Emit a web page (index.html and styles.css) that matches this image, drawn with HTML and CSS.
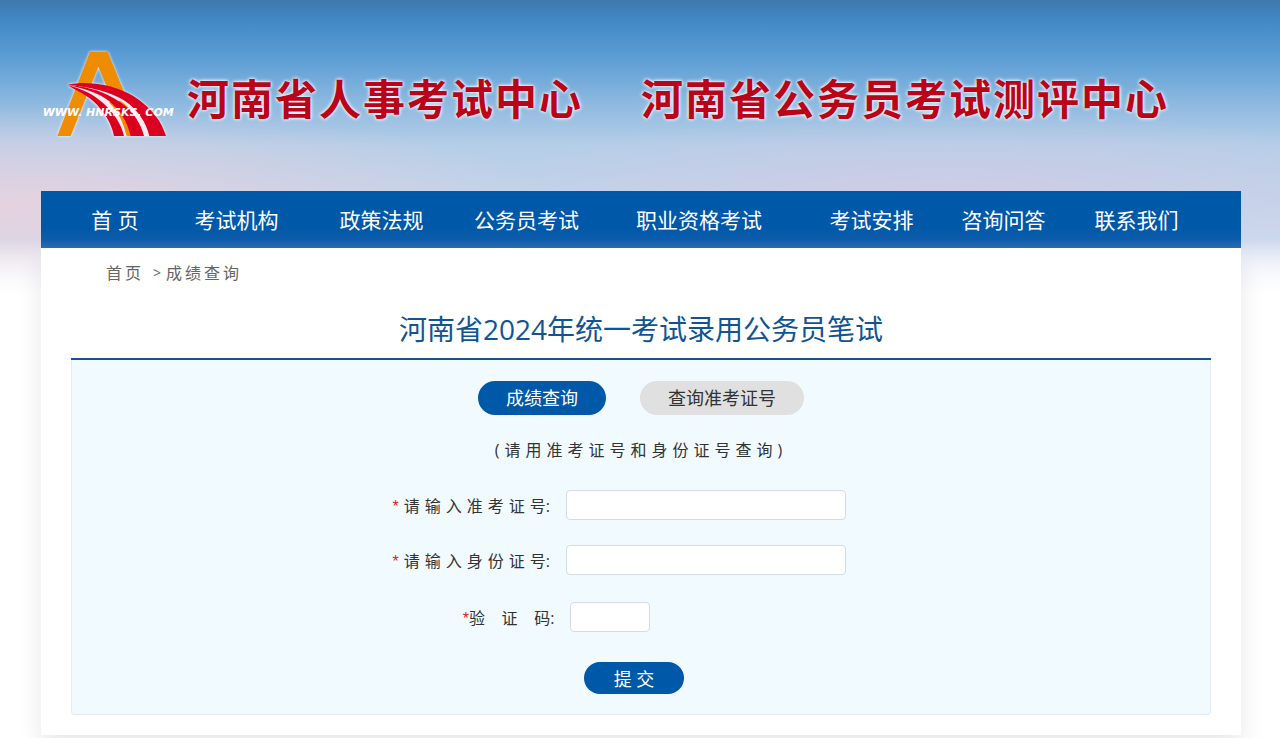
FILE: index.html
```html
<!DOCTYPE html>
<html lang="zh-CN">
<head>
<meta charset="utf-8">
<title>河南省人事考试中心</title>
<link rel="stylesheet" href="styles.css">
</head>
<body>
<div class="page">
  <header class="banner">
    <svg class="logo" viewBox="6 0 414 315" role="img" aria-label="www.hnrsks.com">
      <g class="logo-mark">
        <path fill="#f08c00" d="M150 35H203L306 288H262L175 80L92 288H52Z"/>
        <path fill="#fdeaee" d="M83 135C150 120 230 140 280 170C335 203 365 245 378 288H312C300 240 270 200 240 182L215 192C240 215 252 250 262 288H222C212 240 170 175 83 135Z"/>
        <path fill="#f08c00" d="M214 182C240 205 262 245 272 288H260C250 250 236 215 208 188Z"/>
        <path fill="#dc0020" d="M83 134C150 120 230 138 280 168C335 203 365 245 378 288H328C320 250 294 208 254 182C215 156 150 140 83 134Z"/>
        <path fill="#dc0020" d="M83 135C150 140 200 158 240 186C278 212 302 248 312 288H272C262 246 240 210 208 184C172 156 130 146 83 135Z"/>
        <path fill="#dc0020" d="M83 135C130 148 162 164 190 190C224 222 244 254 252 288H222C214 248 190 212 160 184C136 162 108 152 83 135Z"/>
      </g>
      <text class="logo-url" x="8" y="227">WWW. HNRSKS. COM</text>
    </svg>
    <h1 class="banner-title"><span>河南省人事考试中心</span><span>河南省公务员考试测评中心</span></h1>
  </header>
  <nav class="nav">
    <a href="#">首 页</a>
    <a href="#">考试机构</a>
    <a href="#">政策法规</a>
    <a href="#">公务员考试</a>
    <a href="#">职业资格考试</a>
    <a href="#">考试安排</a>
    <a href="#">咨询问答</a>
    <a href="#">联系我们</a>
  </nav>
  <main class="card">
    <div class="crumbs"><a href="#">首页</a><span class="crumb-sep">&gt;</span><span>成绩查询</span></div>
    <h2 class="title">河南省2024年统一考试录用公务员笔试</h2>
    <form class="panel">
      <div class="tabs">
        <button type="button" class="tab tab-active">成绩查询</button>
        <button type="button" class="tab">查询准考证号</button>
      </div>
      <p class="hint">(请用准考证号和身份证号查询)</p>
      <div class="row">
        <label class="label" for="ticket"><span class="star spaced">*</span><span class="spaced">请输入准考证</span>号:</label>
        <input class="field" id="ticket" type="text">
      </div>
      <div class="row">
        <label class="label" for="idcard"><span class="star spaced">*</span><span class="spaced">请输入身份证</span>号:</label>
        <input class="field" id="idcard" type="text">
      </div>
      <div class="row row-code">
        <label class="label" for="code"><span class="star">*</span>验&nbsp;&nbsp;&nbsp;&nbsp;证&nbsp;&nbsp;&nbsp;&nbsp;码:</label>
        <input class="field field-code" id="code" type="text">
      </div>
      <div class="actions"><button type="submit" class="submit">提 交</button></div>
    </form>
  </main>
</div>
</body>
</html>
```
FILE: styles.css
```css
* { box-sizing: border-box; }

body {
  margin: 0;
  font-family: "Open Sans", "Noto Sans CJK SC", sans-serif;
  font-size: 16px;
  color: #333;
  background:
    linear-gradient(transparent 240px, #fff 295px) no-repeat,
    radial-gradient(ellipse 460px 80px at 74% 190px, rgba(216, 200, 226, 0.6), transparent) no-repeat,
    radial-gradient(ellipse 560px 100px at 0 205px, rgba(238, 210, 220, 0.8), transparent) no-repeat,
    linear-gradient(#3f78af 0, #438bc8 24px, #5e9fd5 60px, #8fbae0 105px, #b5cee8 145px, #c3d3ea 200px, #ccd9ed 240px, #e6eaf4 265px, #fff 320px) no-repeat #fff;
}

a { color: inherit; text-decoration: none; }

button { font-family: inherit; border: 0; cursor: pointer; }

.page {
  max-width: 1280px;
  margin: 0 auto;
  padding: 0 39px 3px 41px;
}

.banner {
  display: flex;
  align-items: flex-start;
  gap: 7px;
  height: 191px;
  padding: 40px 0 0 1px;
}

.logo { width: 138px; height: 105px; flex: none; }

.logo-mark { filter: drop-shadow(0 0 4px #fff); }

.logo-url {
  font: italic bold 33px "DejaVu Sans", sans-serif;
  fill: #fff;
}

.banner-title {
  display: flex;
  gap: 58px;
  margin: 0;
  font-family: "Noto Sans CJK SC", sans-serif;
  font-size: 42px;
  font-weight: 700;
  line-height: 114px;
  letter-spacing: 2px;
  white-space: nowrap;
  color: #b90419;
  text-shadow: 0 0 3px #fff, 0 0 4px #fff;
}

.nav {
  display: grid;
  grid-template-columns: 128fr 115fr 175fr 115fr 230fr 115fr 149fr 117fr;
  align-items: center;
  height: 57px;
  padding: 0 46px 2px 10px;
  font-size: 21px;
  text-align: center;
  white-space: nowrap;
  color: #fff;
  background: linear-gradient(#0058a9 0, #0058a9 65%, #0e5dab 85%, #2e6cb2 100%);
}

.card {
  padding: 0 30px 20px;
  background: #fff;
  box-shadow: 0 14px 24px rgba(0, 0, 0, 0.09);
}

.crumbs {
  display: flex;
  height: 50px;
  padding-left: 35px;
  line-height: 50px;
  letter-spacing: 3px;
  color: #666;
}

.crumb-sep { padding-left: 9px; font-size: 14px; letter-spacing: 5px; }

.title {
  margin: 0;
  height: 62px;
  border-bottom: 2px solid #105493;
  font-size: 28px;
  font-weight: 400;
  line-height: 62px;
  text-align: center;
  color: #105493;
}

.panel {
  padding: 21px 0 20px;
  border: 1px solid #e3edf2;
  border-top: 0;
  border-radius: 0 0 4px 4px;
  background: #f1fafe;
}

.tabs { display: flex; justify-content: center; gap: 34px; }

.tab {
  height: 34px;
  padding: 0 28px;
  border-radius: 17px;
  font-size: 18px;
  line-height: 34px;
  color: #333;
  background: #e0e0e0;
}

.tab-active { color: #fff; background: #0058a9; }

.hint {
  margin: 23px 0 28px;
  line-height: 24px;
  letter-spacing: 5px;
  text-align: center;
}

.row { display: flex; align-items: center; margin-bottom: 25px; }

.row-code { margin: 27px 0 30px; }

.label {
  width: 43.4%;
  padding-right: 16px;
  text-align: right;
  white-space: nowrap;
}

.star { font-family: "Liberation Sans", sans-serif; color: #e02020; }

.spaced { letter-spacing: 5px; }

.field {
  width: 280px;
  height: 30px;
  padding: 0 8px;
  border: 1px solid #d3dce2;
  border-radius: 4px;
  font: inherit;
  background: #fff;
}

.row-code .label { width: 43.8%; }

.field-code { width: 80px; }

.actions { display: flex; justify-content: center; padding-right: 14px; }

.submit {
  width: 100px;
  height: 32px;
  border-radius: 16px;
  font-size: 18px;
  line-height: 32px;
  color: #fff;
  background: #0058a9;
}
```
